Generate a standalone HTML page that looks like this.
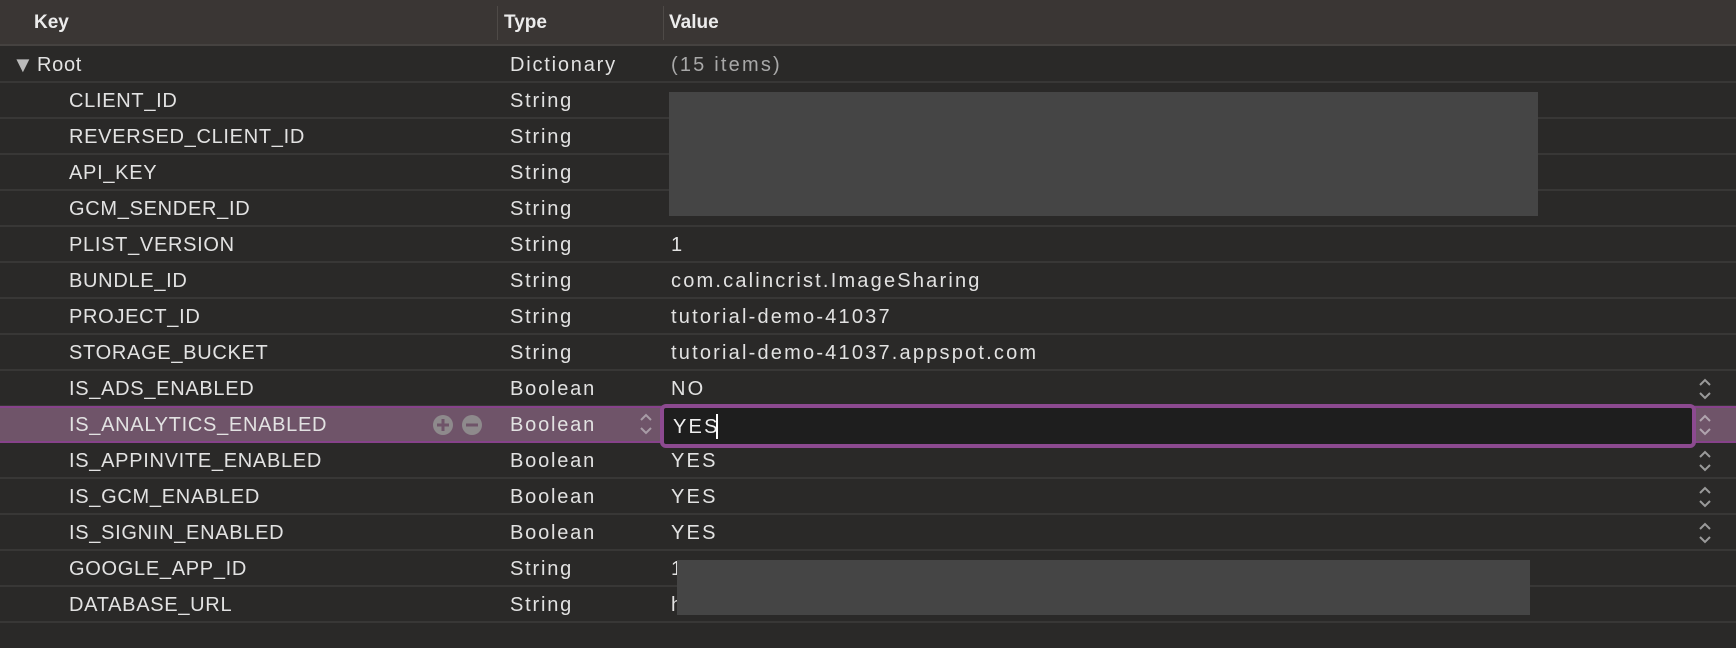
<!DOCTYPE html>
<html><head><meta charset="utf-8"><style>
*{margin:0;padding:0;box-sizing:border-box}
body{width:1736px;height:648px;background:#2a2928;font-family:"Liberation Sans",sans-serif;color:#e2e2e2;position:relative;overflow:hidden}
.hdr{position:absolute;left:0;top:0;width:1736px;height:46px;background:#3a3634;border-bottom:2px solid #454240}
.hdr span{position:absolute;top:12px;font-size:19px;font-weight:bold;color:#ececec}
.vs{position:absolute;top:6px;width:1px;height:34px;background:#4e4a47}
.row{position:absolute;left:0;width:1736px;height:36px;border-bottom:2px solid #383736}
.row span{position:absolute;top:7px;font-size:20px;white-space:nowrap}
.k{left:69px;letter-spacing:0.7px}.t{left:510px;letter-spacing:1.8px}.v{left:671px;letter-spacing:2.2px}
.sel{background:#6f5469;border-top:2px solid #86428a;border-bottom:2px solid #86428a}
.chev{position:absolute;width:14px;height:26px}
.redact{position:absolute;background:#454545}
</style></head><body>
<div class="hdr"><span style="left:34px">Key</span><span style="left:504px">Type</span><span style="left:669px">Value</span></div>
<div class="vs" style="left:497px"></div><div class="vs" style="left:663px"></div>

<div class="row" style="top:47px"><span style="left:12px;font-size:22px;top:5px;color:#bbb">▼</span><span style="left:37px;letter-spacing:0.7px">Root</span><span class="t">Dictionary</span><span class="v" style="color:#a8a8a8">(15 items)</span></div>
<div class="row" style="top:83px"><span class="k">CLIENT_ID</span><span class="t">String</span></div>
<div class="row" style="top:119px"><span class="k">REVERSED_CLIENT_ID</span><span class="t">String</span></div>
<div class="row" style="top:155px"><span class="k">API_KEY</span><span class="t">String</span></div>
<div class="row" style="top:191px"><span class="k">GCM_SENDER_ID</span><span class="t">String</span></div>
<div class="row" style="top:227px"><span class="k">PLIST_VERSION</span><span class="t">String</span><span class="v">1</span></div>
<div class="row" style="top:263px"><span class="k">BUNDLE_ID</span><span class="t">String</span><span class="v">com.calincrist.ImageSharing</span></div>
<div class="row" style="top:299px"><span class="k">PROJECT_ID</span><span class="t">String</span><span class="v">tutorial-demo-41037</span></div>
<div class="row" style="top:335px"><span class="k">STORAGE_BUCKET</span><span class="t">String</span><span class="v">tutorial-demo-41037.appspot.com</span></div>
<div class="row" style="top:371px"><span class="k">IS_ADS_ENABLED</span><span class="t">Boolean</span><span class="v">NO</span></div>
<div class="row sel" style="top:406px;height:37px"><span class="k" style="top:6px">IS_ANALYTICS_ENABLED</span><span class="t" style="top:6px">Boolean</span></div>
<div class="row" style="top:443px"><span class="k">IS_APPINVITE_ENABLED</span><span class="t">Boolean</span><span class="v">YES</span></div>
<div class="row" style="top:479px"><span class="k">IS_GCM_ENABLED</span><span class="t">Boolean</span><span class="v">YES</span></div>
<div class="row" style="top:515px"><span class="k">IS_SIGNIN_ENABLED</span><span class="t">Boolean</span><span class="v">YES</span></div>
<div class="row" style="top:551px"><span class="k">GOOGLE_APP_ID</span><span class="t">String</span><span class="v">1</span></div>
<div class="row" style="top:587px"><span class="k">DATABASE_URL</span><span class="t">String</span><span class="v">h</span></div>

<div class="redact" style="left:669px;top:92px;width:869px;height:124px"></div>
<div class="redact" style="left:677px;top:560px;width:853px;height:55px"></div>

<div style="position:absolute;left:660px;top:404px;width:1036px;height:44px;border:4px solid #8c4a90;border-radius:6px;background:#1e1e1e">
<span style="position:absolute;left:9px;top:8px;font-size:20px;letter-spacing:2.2px;color:#f0f0f0">YES</span>
<div style="position:absolute;left:52px;top:6px;width:2px;height:25px;background:#fff"></div>
</div>
<div style="position:absolute;left:1696px;top:406px;width:40px;height:37px;background:#6f5469;border-top:2px solid #86428a;border-bottom:2px solid #86428a"></div>

<svg style="position:absolute;left:432px;top:414px" width="52" height="22">
<circle cx="11" cy="11" r="10" fill="#8e8a8c"/><path d="M11 5v12M5 11h12" stroke="#6f5469" stroke-width="3"/>
<circle cx="40" cy="11" r="10" fill="#8e8a8c"/><path d="M34 11h12" stroke="#6f5469" stroke-width="3"/>
</svg>
<svg class="chev" style="left:639px;top:411px" viewBox="0 0 14 26"><path d="M2 9l5-5 5 5M2 17l5 5 5-5" stroke="#a89ca6" stroke-width="2" fill="none"/></svg>

<svg class="chev" style="left:1698px;top:376px" viewBox="0 0 14 26"><path d="M2 9l5-5 5 5M2 17l5 5 5-5" stroke="#9a9a9a" stroke-width="2" fill="none"/></svg>
<svg class="chev" style="left:1698px;top:412px" viewBox="0 0 14 26"><path d="M2 9l5-5 5 5M2 17l5 5 5-5" stroke="#b0a4ae" stroke-width="2" fill="none"/></svg>
<svg class="chev" style="left:1698px;top:448px" viewBox="0 0 14 26"><path d="M2 9l5-5 5 5M2 17l5 5 5-5" stroke="#9a9a9a" stroke-width="2" fill="none"/></svg>
<svg class="chev" style="left:1698px;top:484px" viewBox="0 0 14 26"><path d="M2 9l5-5 5 5M2 17l5 5 5-5" stroke="#9a9a9a" stroke-width="2" fill="none"/></svg>
<svg class="chev" style="left:1698px;top:520px" viewBox="0 0 14 26"><path d="M2 9l5-5 5 5M2 17l5 5 5-5" stroke="#9a9a9a" stroke-width="2" fill="none"/></svg>
</body></html>
